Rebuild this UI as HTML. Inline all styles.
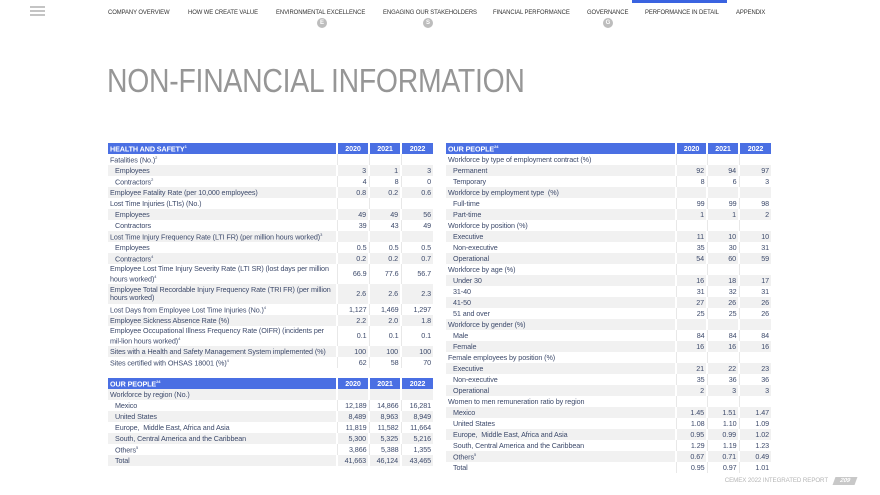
<!DOCTYPE html>
<html><head><meta charset="utf-8"><style>
*{margin:0;padding:0;box-sizing:border-box}
body{width:880px;height:495px;background:#fff;font-family:"Liberation Sans",sans-serif;position:relative;overflow:hidden;color:#3d4a6b}
.ham{position:absolute;left:30px;top:6px;width:15px}
.ham div{height:2px;background:#c4c4c4;margin-bottom:2px}
.nav{position:absolute;top:9px;font-size:6.6px;color:#333;white-space:nowrap;letter-spacing:-0.1px;transform-origin:left;transform:scaleX(0.9)}
.badge{position:absolute;top:18px;width:10px;height:10px;border-radius:50%;background:#bdbdbd;color:#fff;font-size:6px;font-weight:bold;text-align:center;line-height:10px}
.bar{position:absolute;left:632px;top:0;width:95px;height:3px;background:#3a63e0}
h1{position:absolute;left:107px;top:62px;font-size:33px;font-weight:normal;color:#969696;letter-spacing:-0.3px;white-space:nowrap;transform-origin:left;transform:scaleX(0.86)}
table{position:absolute;border-collapse:collapse;font-size:7.2px;table-layout:fixed}
th{background:#4a6fe3;color:#fff;font-weight:bold;height:11px;padding:0 2px;text-align:left;border-left:2px solid #fff;font-size:7.2px;letter-spacing:-0.1px}
th:first-child{border-left:none}
th.n{text-align:center}
td{height:11px;padding:0 2px 0 2px;line-height:8px;white-space:nowrap;letter-spacing:-0.1px}
td.n{text-align:right;border-left:2px solid #fff;padding-right:2px}
tr.g td{background:#f1f1f1}
tr:not(.g) td.n{border-left:1px solid #e8e8e8}
td.i{padding-left:7px}
tr.t td{height:20px;white-space:normal}
sup{font-size:4px}
.foot{position:absolute;right:52px;top:477px;font-size:6.2px;color:#b5b5b5;white-space:nowrap;letter-spacing:-0.1px}
.pg{position:absolute;left:834px;top:477px;width:22px;height:8px;background:#c8c8c8;transform:skewX(-20deg);color:#fff;font-size:6px;text-align:center;line-height:8px;font-weight:bold}
</style></head><body>
<div class="ham"><div></div><div></div><div></div></div>
<div class="nav" style="left:108px">COMPANY OVERVIEW</div>
<div class="nav" style="left:188px">HOW WE CREATE VALUE</div>
<div class="nav" style="left:276px">ENVIRONMENTAL EXCELLENCE</div>
<div class="nav" style="left:383px">ENGAGING OUR STAKEHOLDERS</div>
<div class="nav" style="left:493px">FINANCIAL PERFORMANCE</div>
<div class="nav" style="left:587px">GOVERNANCE</div>
<div class="nav" style="left:645px">PERFORMANCE IN DETAIL</div>
<div class="nav" style="left:736px">APPENDIX</div>
<div class="badge" style="left:317px">E</div>
<div class="badge" style="left:423px">S</div>
<div class="badge" style="left:603px">G</div>
<div class="bar"></div>
<h1>NON-FINANCIAL INFORMATION</h1>

<table style="left:108px;top:143px;width:325px">
<colgroup><col style="width:229px"><col style="width:32px"><col style="width:32px"><col style="width:32px"></colgroup>
<tr><th>HEALTH AND SAFETY<sup>1</sup></th><th class="n">2020</th><th class="n">2021</th><th class="n">2022</th></tr>
<tr><td>Fatalities (No.)<sup>2</sup></td><td class="n"></td><td class="n"></td><td class="n"></td></tr>
<tr class="g"><td class="i">Employees</td><td class="n">3</td><td class="n">1</td><td class="n">3</td></tr>
<tr><td class="i">Contractors<sup>2</sup></td><td class="n">4</td><td class="n">8</td><td class="n">0</td></tr>
<tr class="g"><td>Employee Fatality Rate (per 10,000 employees)</td><td class="n">0.8</td><td class="n">0.2</td><td class="n">0.6</td></tr>
<tr><td>Lost Time Injuries (LTIs) (No.)</td><td class="n"></td><td class="n"></td><td class="n"></td></tr>
<tr class="g"><td class="i">Employees</td><td class="n">49</td><td class="n">49</td><td class="n">56</td></tr>
<tr><td class="i">Contractors</td><td class="n">39</td><td class="n">43</td><td class="n">49</td></tr>
<tr class="g"><td>Lost Time Injury Frequency Rate (LTI FR) (per million hours worked)<sup>3</sup></td><td class="n"></td><td class="n"></td><td class="n"></td></tr>
<tr><td class="i">Employees</td><td class="n">0.5</td><td class="n">0.5</td><td class="n">0.5</td></tr>
<tr class="g"><td class="i">Contractors<sup>4</sup></td><td class="n">0.2</td><td class="n">0.2</td><td class="n">0.7</td></tr>
<tr class="t"><td>Employee Lost Time Injury Severity Rate (LTI SR) (lost days per million hours worked)<sup>4</sup></td><td class="n">66.9</td><td class="n">77.6</td><td class="n">56.7</td></tr>
<tr class="t g"><td>Employee Total Recordable Injury Frequency Rate (TRI FR) (per million hours worked)</td><td class="n">2.6</td><td class="n">2.6</td><td class="n">2.3</td></tr>
<tr><td>Lost Days from Employee Lost Time Injuries (No.)<sup>4</sup></td><td class="n">1,127</td><td class="n">1,469</td><td class="n">1,297</td></tr>
<tr class="g"><td>Employee Sickness Absence Rate (%)</td><td class="n">2.2</td><td class="n">2.0</td><td class="n">1.8</td></tr>
<tr class="t"><td>Employee Occupational Illness Frequency Rate (OIFR) (incidents per mil-lion hours worked)<sup>4</sup></td><td class="n">0.1</td><td class="n">0.1</td><td class="n">0.1</td></tr>
<tr class="g"><td>Sites with a Health and Safety Management System implemented (%)</td><td class="n">100</td><td class="n">100</td><td class="n">100</td></tr>
<tr><td>Sites certified with OHSAS 18001 (%)<sup>4</sup></td><td class="n">62</td><td class="n">58</td><td class="n">70</td></tr>
</table>

<table style="left:108px;top:378px;width:325px">
<colgroup><col style="width:229px"><col style="width:32px"><col style="width:32px"><col style="width:32px"></colgroup>
<tr><th>OUR PEOPLE<sup>24</sup></th><th class="n">2020</th><th class="n">2021</th><th class="n">2022</th></tr>
<tr class="g"><td>Workforce by region (No.)</td><td class="n"></td><td class="n"></td><td class="n"></td></tr>
<tr><td class="i">Mexico</td><td class="n">12,189</td><td class="n">14,866</td><td class="n">16,281</td></tr>
<tr class="g"><td class="i">United States</td><td class="n">8,489</td><td class="n">8,963</td><td class="n">8,949</td></tr>
<tr><td class="i">Europe,&nbsp; Middle East, Africa and Asia</td><td class="n">11,819</td><td class="n">11,582</td><td class="n">11,664</td></tr>
<tr class="g"><td class="i">South, Central America and the Caribbean</td><td class="n">5,300</td><td class="n">5,325</td><td class="n">5,216</td></tr>
<tr><td class="i">Others<sup>5</sup></td><td class="n">3,866</td><td class="n">5,388</td><td class="n">1,355</td></tr>
<tr class="g"><td class="i">Total</td><td class="n">41,663</td><td class="n">46,124</td><td class="n">43,465</td></tr>
</table>

<table style="left:446px;top:143px;width:325px">
<colgroup><col style="width:230px"><col style="width:31px"><col style="width:32px"><col style="width:32px"></colgroup>
<tr><th>OUR PEOPLE<sup>24</sup></th><th class="n">2020</th><th class="n">2021</th><th class="n">2022</th></tr>
<tr><td>Workforce by type of employment contract (%)</td><td class="n"></td><td class="n"></td><td class="n"></td></tr>
<tr class="g"><td class="i">Permanent</td><td class="n">92</td><td class="n">94</td><td class="n">97</td></tr>
<tr><td class="i">Temporary</td><td class="n">8</td><td class="n">6</td><td class="n">3</td></tr>
<tr class="g"><td>Workforce by employment type&nbsp; (%)</td><td class="n"></td><td class="n"></td><td class="n"></td></tr>
<tr><td class="i">Full-time</td><td class="n">99</td><td class="n">99</td><td class="n">98</td></tr>
<tr class="g"><td class="i">Part-time</td><td class="n">1</td><td class="n">1</td><td class="n">2</td></tr>
<tr><td>Workforce by position (%)</td><td class="n"></td><td class="n"></td><td class="n"></td></tr>
<tr class="g"><td class="i">Executive</td><td class="n">11</td><td class="n">10</td><td class="n">10</td></tr>
<tr><td class="i">Non-executive</td><td class="n">35</td><td class="n">30</td><td class="n">31</td></tr>
<tr class="g"><td class="i">Operational</td><td class="n">54</td><td class="n">60</td><td class="n">59</td></tr>
<tr><td>Workforce by age (%)</td><td class="n"></td><td class="n"></td><td class="n"></td></tr>
<tr class="g"><td class="i">Under 30</td><td class="n">16</td><td class="n">18</td><td class="n">17</td></tr>
<tr><td class="i">31-40</td><td class="n">31</td><td class="n">32</td><td class="n">31</td></tr>
<tr class="g"><td class="i">41-50</td><td class="n">27</td><td class="n">26</td><td class="n">26</td></tr>
<tr><td class="i">51 and over</td><td class="n">25</td><td class="n">25</td><td class="n">26</td></tr>
<tr class="g"><td>Workforce by gender (%)</td><td class="n"></td><td class="n"></td><td class="n"></td></tr>
<tr><td class="i">Male</td><td class="n">84</td><td class="n">84</td><td class="n">84</td></tr>
<tr class="g"><td class="i">Female</td><td class="n">16</td><td class="n">16</td><td class="n">16</td></tr>
<tr><td>Female employees by position (%)</td><td class="n"></td><td class="n"></td><td class="n"></td></tr>
<tr class="g"><td class="i">Executive</td><td class="n">21</td><td class="n">22</td><td class="n">23</td></tr>
<tr><td class="i">Non-executive</td><td class="n">35</td><td class="n">36</td><td class="n">36</td></tr>
<tr class="g"><td class="i">Operational</td><td class="n">2</td><td class="n">3</td><td class="n">3</td></tr>
<tr><td>Women to men remuneration ratio by region</td><td class="n"></td><td class="n"></td><td class="n"></td></tr>
<tr class="g"><td class="i">Mexico</td><td class="n">1.45</td><td class="n">1.51</td><td class="n">1.47</td></tr>
<tr><td class="i">United States</td><td class="n">1.08</td><td class="n">1.10</td><td class="n">1.09</td></tr>
<tr class="g"><td class="i">Europe,&nbsp; Middle East, Africa and Asia</td><td class="n">0.95</td><td class="n">0.99</td><td class="n">1.02</td></tr>
<tr><td class="i">South, Central America and the Caribbean</td><td class="n">1.29</td><td class="n">1.19</td><td class="n">1.23</td></tr>
<tr class="g"><td class="i">Others<sup>5</sup></td><td class="n">0.67</td><td class="n">0.71</td><td class="n">0.49</td></tr>
<tr><td class="i">Total</td><td class="n">0.95</td><td class="n">0.97</td><td class="n">1.01</td></tr>
</table>

<div class="foot">CEMEX 2022 INTEGRATED REPORT</div>
<div class="pg">209</div>
</body></html>
